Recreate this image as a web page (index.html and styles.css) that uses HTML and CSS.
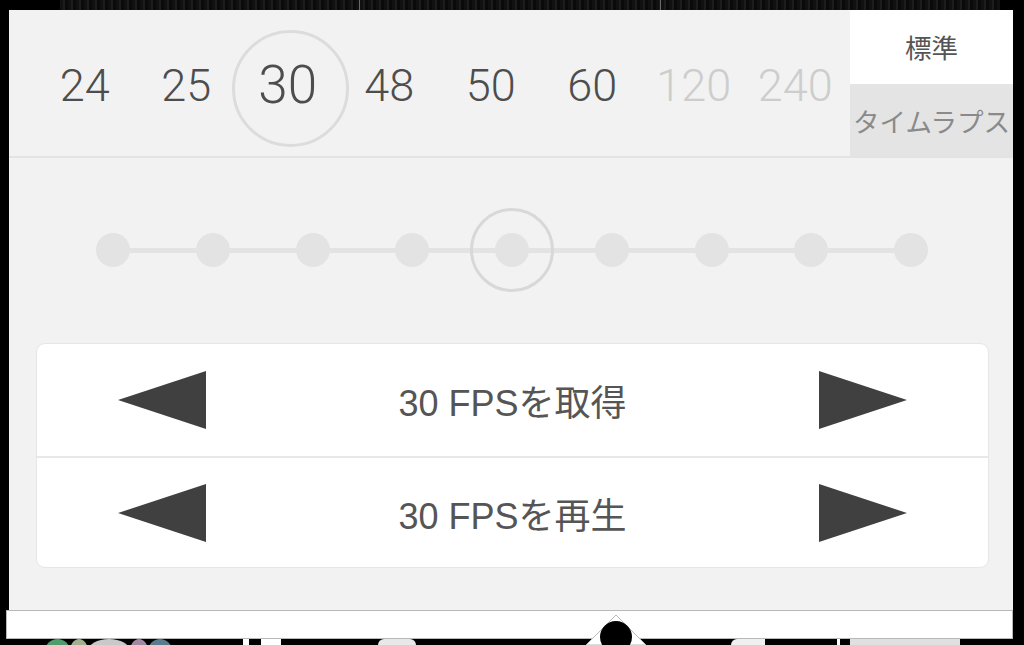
FILE: index.html
```html
<!DOCTYPE html>
<html lang="ja">
<head>
<meta charset="utf-8">
<title>FPS</title>
<link rel="stylesheet" href="styles.css">
</head>
<body>
<div class="screen">
  <div class="topbar">
    <div class="seg seg-a"></div>
    <div class="seg seg-b"></div>
    <div class="seg seg-c"></div>
  </div>
  <div class="panel">
    <div class="header">
      <div class="fps-list">
        <span class="fps">24</span>
        <span class="fps">25</span>
        <span class="fps selected">30</span>
        <span class="fps">48</span>
        <span class="fps">50</span>
        <span class="fps">60</span>
        <span class="fps disabled">120</span>
        <span class="fps disabled">240</span>
      </div>
      <div class="tabs">
        <div class="tab active">標準</div>
        <div class="tab">タイムラプス</div>
      </div>
    </div>
    <div class="slider">
      <span class="dot"></span>
      <span class="dot"></span>
      <span class="dot"></span>
      <span class="dot"></span>
      <span class="dot current"></span>
      <span class="dot"></span>
      <span class="dot"></span>
      <span class="dot"></span>
      <span class="dot"></span>
    </div>
    <div class="card">
      <div class="row">
        <svg class="arrow" width="88" height="58" viewBox="0 0 88 58"><polygon points="0,29 88,0 88,58"/></svg>
        <span class="label">30 FPSを取得</span>
        <svg class="arrow" width="88" height="58" viewBox="0 0 88 58"><polygon points="0,0 88,29 0,58"/></svg>
      </div>
      <div class="row row-last">
        <svg class="arrow" width="88" height="58" viewBox="0 0 88 58"><polygon points="0,29 88,0 88,58"/></svg>
        <span class="label">30 FPSを再生</span>
        <svg class="arrow" width="88" height="58" viewBox="0 0 88 58"><polygon points="0,0 88,29 0,58"/></svg>
      </div>
    </div>
  </div>
  <div class="bottom">
    <div class="bar"></div>
    <div class="dock">
      <span class="chip c-green"></span>
      <span class="chip c-sage"></span>
      <span class="chip c-gray"></span>
      <span class="chip c-mauve"></span>
      <span class="chip c-slate"></span>
      <span class="mark m1"></span>
      <span class="mark m2"></span>
      <span class="mark m3"></span>
      <span class="mark m4"></span>
      <span class="mark m5"></span>
      <span class="mark m6"></span>
    </div>
    <svg class="handle" width="62" height="31" viewBox="0 0 62 31">
      <polygon points="1,31 31,1 61,31" fill="#fff" stroke="#b8b8b8" stroke-width="1"/>
      <circle cx="31" cy="23" r="16" fill="#000"/>
    </svg>
  </div>
</div>
</body>
</html>
```

FILE: styles.css
```css
* { box-sizing: border-box; }
html, body {
  margin: 0;
  padding: 0;
  background: #000;
}
body {
  width: 1024px;
  height: 645px;
  overflow: hidden;
  font-family: "Liberation Sans", "Noto Sans CJK JP", sans-serif;
}
.screen {
  width: 1024px;
  height: 645px;
  overflow: hidden;
  background: #000;
}

/* top strip */
.topbar {
  display: flex;
  height: 10px;
  padding-left: 60px;
}
.seg {
  height: 10px;
  background: repeating-linear-gradient(90deg, #111 0 3px, #1c1c1c 3px 5px, #0a0a0a 5px 8px);
}
.seg-a { width: 299px; }
.seg-b { width: 301px; border-left: 1px solid #6a6a6a; }
.seg-c { width: 340px; border-left: 1px solid #6a6a6a; }

/* main panel */
.panel {
  margin-left: 9px;
  width: 1004px;
  height: 600px;
  background: #f2f2f2;
}

.header {
  display: flex;
  height: 148px;
  border-bottom: 2px solid #e3e3e3;
}
.fps-list {
  flex: 1;
  display: flex;
  align-items: center;
  padding-left: 25px;
  padding-top: 4px;
}
.fps {
  width: 101.5px;
  text-align: center;
  font-family: "Roboto", "Liberation Sans", sans-serif;
  font-weight: 300;
  font-size: 45px;
  line-height: 1;
  color: #4d4d4d;
}
.fps.selected {
  position: relative;
  font-size: 53px;
}
.fps.selected::before {
  content: "";
  position: absolute;
  left: 50%;
  top: 50%;
  width: 111px;
  height: 111px;
  margin: -55.5px 0 0 -55.5px;
  border: 3px solid #dcdcdc;
  border-radius: 50%;
}
.fps.disabled {
  color: #cdcdcd;
}

.tabs {
  width: 163px;
  display: flex;
  flex-direction: column;
}
.tab {
  flex: 1;
  display: flex;
  align-items: center;
  justify-content: center;
  font-size: 26.5px;
  color: #8a8a8a;
  background: #e4e4e4;
  white-space: nowrap;
  overflow: hidden;
}
.tab.active {
  background: #fff;
  color: #555;
  padding-bottom: 2px;
}

/* slider */
.slider {
  margin: 49px 0 0 87px;
  width: 832px;
  height: 86px;
  display: flex;
  justify-content: space-between;
  align-items: center;
  background: linear-gradient(#e3e3e3, #e3e3e3) no-repeat center / calc(100% - 34px) 5px;
}
.dot {
  width: 34px;
  height: 34px;
  border-radius: 50%;
  background: #e3e3e3;
}
.dot.current {
  outline: 3px solid #d8d8d8;
  outline-offset: 22px;
}

/* buttons card */
.card {
  margin: 50px 0 0 27px;
  width: 953px;
  background: #fff;
  border: 1px solid #e6e6e6;
  border-radius: 9px;
}
.row {
  display: flex;
  align-items: center;
  height: 114px;
  padding: 0 81px;
  border-bottom: 2px solid #e8e8e8;
}
.row-last {
  height: 109px;
  border-bottom: none;
}
.arrow {
  display: block;
  fill: #404040;
}
.label {
  flex: 1;
  text-align: center;
  font-size: 36px;
  color: #555;
}

/* bottom */
.bottom {
  position: relative;
  height: 35px;
}
.bar {
  margin-left: 6px;
  width: 1007px;
  height: 29px;
  background: #fff;
  border: 1px solid #b8b8b8;
}
.dock {
  display: flex;
  height: 6px;
  padding-left: 45px;
}
.chip {
  height: 12px;
  border-radius: 50% 50% 0 0 / 100% 100% 0 0;
}
.c-green { width: 25px; background: #4f9c6d; }
.c-sage { width: 18px; background: #a1b08e; }
.c-gray { width: 42px; background: #c9c9c9; }
.c-mauve { width: 18px; background: #a08aa2; }
.c-slate { width: 24px; background: #5a7c8c; }
.mark { height: 6px; background: #fff; }
.m1 { width: 6px; margin-left: 71px; }
.m2 { width: 20px; margin-left: 12px; }
.m3 { width: 38px; margin-left: 97px; border-radius: 19px 19px 0 0; background: #e8e8e8; }
.m4 { width: 34px; margin-left: 315px; background: #f0f0f0; border-radius: 20px 0 0 0; }
.m5 { width: 3px; margin-left: 72px; }
.m6 { width: 110px; margin-left: 10px; background: #e0e0e0; }

.handle {
  position: absolute;
  left: 585px;
  top: 4px;
  display: block;
}
```
